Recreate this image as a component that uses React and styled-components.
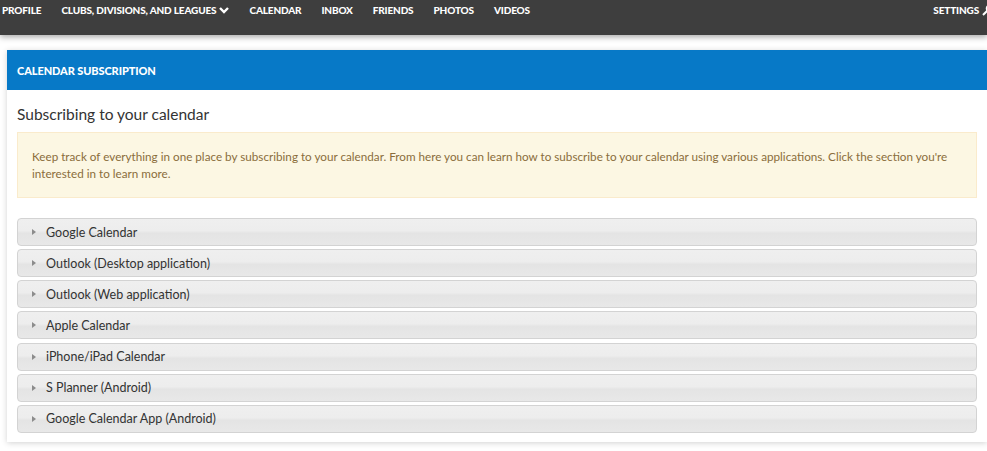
import React from "react";
import styled, { createGlobalStyle } from "styled-components";

const GlobalStyle = createGlobalStyle`
    html {
        overflow: hidden;
    }
    body {
        margin: 0;
        padding: 0;
        background: #ffffff;
        font-family: "Lato", "Liberation Sans", sans-serif;
    }
`;

const TopNav = styled.nav`
    height: 35px;
    background-color: #3e3e3e;
    display: flex;
    justify-content: space-between;
    align-items: flex-start;
    box-shadow: 0 2px 6px rgba(0, 0, 0, 0.35);
    position: relative;
    z-index: 1;
    overflow: hidden;
`;

const NavGroup = styled.div`
    display: flex;
`;

const NavLink = styled.a`
    color: #ffffff;
    text-decoration: none;
    font-family: "Lato", "Liberation Sans", sans-serif;
    font-weight: 900;
    font-size: 10px;
    letter-spacing: -0.15px;
    line-height: 20px;
    padding: 0 10px 0 ${(p) => (p.$first ? "2px" : "10px")};
    margin-right: ${(p) => (p.$edge ? "-17px" : "0")};
    display: flex;
    align-items: center;
    gap: 3px;
    white-space: nowrap;
`;

const Page = styled.main`
    padding: 15px 0 20px 7px;
`;

const Card = styled.section`
    width: 980px;
    background: #ffffff;
    box-shadow: 0 1px 6px rgba(0, 0, 0, 0.18);
    padding-bottom: 9px;
`;

const CardHeader = styled.header`
    height: 40px;
    background-color: #0779c7;
    color: #ffffff;
    font-weight: 900;
    font-size: 11px;
    letter-spacing: -0.1px;
    display: flex;
    align-items: center;
    padding-left: 10px;
`;

const CardBody = styled.div`
    padding: 0 10px;
`;

const Title = styled.h2`
    font-weight: 400;
    font-size: 15.5px;
    color: #333333;
    margin: 13px 0 7px;
    line-height: 22px;
`;

const Notice = styled.div`
    background-color: #fcf7e3;
    border: 1px solid #faebcc;
    color: #8a6d3b;
    font-size: 11.7px;
    line-height: 17px;
    padding: 15px 14px;
    margin-bottom: 20px;
`;

const List = styled.div`
    display: flex;
    flex-direction: column;
    gap: 3.17px;
`;

const Item = styled.div`
    height: 26px;
    border: 1px solid #d3d3d3;
    border-radius: 4px;
    background: linear-gradient(to bottom, #efefef 0%, #ededed 45%, #e4e4e4 55%, #e8e8e8 100%);
    display: flex;
    align-items: center;
    padding-left: 14px;
    gap: 10px;
    font-size: 12.5px;
    color: #333333;
`;

const Arrow = styled.span`
    width: 0;
    height: 0;
    border-top: 3.5px solid transparent;
    border-bottom: 3.5px solid transparent;
    border-left: 4px solid #8c8c8c;
`;

const navItems = ["CALENDAR", "INBOX", "FRIENDS", "PHOTOS", "VIDEOS"];

const sections = [
    "Google Calendar",
    "Outlook (Desktop application)",
    "Outlook (Web application)",
    "Apple Calendar",
    "iPhone/iPad Calendar",
    "S Planner (Android)",
    "Google Calendar App (Android)",
];

export default function App() {
    return (
        <>
            <GlobalStyle />
            <TopNav>
                <NavGroup>
                    <NavLink href="#" $first>PROFILE</NavLink>
                    <NavLink href="#">
                        CLUBS, DIVISIONS, AND LEAGUES
                        <svg width="10" height="8" viewBox="0 0 10 8">
                            <path d="M1 2 L5 6 L9 2" stroke="#fff" strokeWidth="2.4" fill="none" />
                        </svg>
                    </NavLink>
                    {navItems.map((n) => (
                        <NavLink href="#" key={n}>{n}</NavLink>
                    ))}
                </NavGroup>
                <NavLink href="#" $edge>
                    SETTINGS
                    <svg width="12" height="12" viewBox="0 0 12 12">
                        <path d="M1 11 L8 4" stroke="#fff" strokeWidth="2" />
                        <path d="M7 1.5 A3 3 0 1 0 10.5 5" stroke="#fff" strokeWidth="1.6" fill="none" />
                    </svg>
                </NavLink>
            </TopNav>
            <Page>
                <Card>
                    <CardHeader>CALENDAR SUBSCRIPTION</CardHeader>
                    <CardBody>
                        <Title>Subscribing to your calendar</Title>
                        <Notice>
                            Keep track of everything in one place by subscribing to your calendar. From here you can learn how to subscribe to your calendar using various applications. Click the section you're interested in to learn more.
                        </Notice>
                        <List>
                            {sections.map((s) => (
                                <Item key={s}>
                                    <Arrow />
                                    {s}
                                </Item>
                            ))}
                        </List>
                    </CardBody>
                </Card>
            </Page>
        </>
    );
}
